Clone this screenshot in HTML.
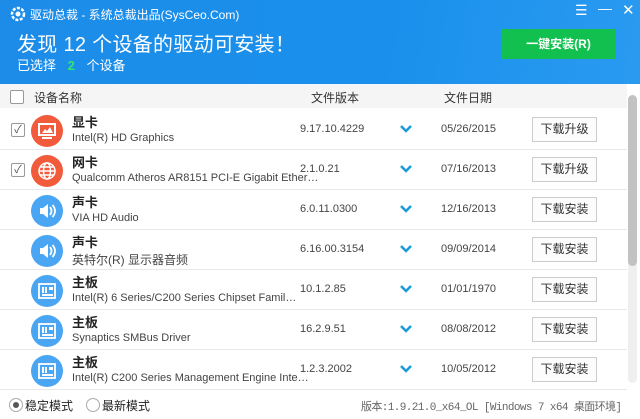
<!DOCTYPE html><html><head><meta charset="utf-8"><style>
*{margin:0;padding:0;box-sizing:border-box}
body{width:640px;height:419px;overflow:hidden;background:#fff;font-family:"Liberation Sans","Noto Sans CJK SC",sans-serif;position:relative;color:#333}
.hd{position:absolute;left:0;top:0;width:640px;height:84px;background:linear-gradient(100deg,#1c8ce8 0%,#1a90ec 60%,#2a9af0 100%)}
.a{position:absolute;white-space:nowrap}
.colh{position:absolute;left:0;top:84px;width:627px;height:24px;background:#f5f5f5}
.cb{position:absolute;width:14px;height:14px;border:1px solid #999;background:#fff;border-radius:2px}
.row{position:absolute;left:0;width:627px;height:40px;border-bottom:1px solid #e8e8e8}
.ic{position:absolute;left:31px;top:5px;width:32px;height:32px;border-radius:50%}
.t{position:absolute;left:72px;top:2px;font-size:13px;font-weight:bold;color:#222}
.s{position:absolute;left:72px;top:22px;font-size:11px;color:#444}
.v{position:absolute;left:300px;top:13px;font-size:11px;color:#444}
.d{position:absolute;left:441px;top:13px;font-size:11px;color:#444}
.chev{position:absolute;left:400px;top:14px}
.btn{position:absolute;left:532px;top:7px;width:65px;height:25px;border:1px solid #ccc;background:#fcfcfc;font-size:12px;text-align:center;line-height:23px;color:#333}
</style></head><body>
<div class="hd"></div>
<svg class="a" style="left:10px;top:6px" width="16" height="16" viewBox="0 0 16 16"><circle cx="8" cy="8" r="6" fill="none" stroke="#fff" stroke-width="2.5" stroke-dasharray="3 1.5"/><circle cx="8" cy="8" r="2.5" fill="#fff"/></svg>
<div class="a" style="left:30px;top:6px;font-size:12px;color:#fff">驱动总裁 - 系统总裁出品(SysCeo.Com)</div>
<div class="a" style="left:575px;top:2px;color:#fff;font-size:14px">☰</div>
<div class="a" style="left:598px;top:0px;color:#fff;font-size:14px">—</div>
<div class="a" style="left:622px;top:1px;color:#fff;font-size:15px">✕</div>
<div class="a" style="left:17px;top:28px;font-size:20px;color:#fff;letter-spacing:0.3px">发现 12 个设备的驱动可安装！</div>
<div class="a" style="left:17px;top:55px;font-size:13px;color:#fff">已选择 <span style="color:#2ee86a;font-weight:bold;margin:0 8px">2</span> 个设备</div>
<div class="a" style="left:501px;top:29px;width:115px;height:30px;background:#12c04f;color:#fff;font-size:12px;font-weight:bold;text-align:center;line-height:30px">一键安装(R)</div>
<div class="colh"></div>
<div class="cb" style="left:10px;top:90px"></div>
<div class="a" style="left:34px;top:89px;font-size:12px">设备名称</div>
<div class="a" style="left:311px;top:89px;font-size:12px">文件版本</div>
<div class="a" style="left:444px;top:89px;font-size:12px">文件日期</div>
<div class="a" style="left:628px;top:95px;width:9px;height:288px;background:#efefef;border-radius:5px"></div>
<div class="a" style="left:628px;top:95px;width:9px;height:171px;background:#c2c2c2;border-radius:5px"></div>

<div class="row" style="top:110px"><div class="cb" style="left:11px;top:13px;text-align:center;font-size:11px;line-height:12px;color:#555">✓</div><div class="ic" style="background:#f15a3b"><svg width="32" height="32"><rect x="8" y="9" width="16" height="11" fill="none" stroke="#fff" stroke-width="2"/><path d="M11 18l3-4 2 2 3-4 3 6z" fill="#fff"/><rect x="11" y="22" width="10" height="2" fill="#fff"/></svg></div><div class="t">显卡</div><div class="s">Intel(R) HD Graphics</div><div class="v">9.17.10.4229</div><svg class="chev" width="12" height="10"><path d="M1 2l5 5 5-5" stroke="#1a9ad8" stroke-width="2.5" fill="none"/></svg><div class="d">05/26/2015</div><div class="btn">下载升级</div></div>
<div class="row" style="top:150px"><div class="cb" style="left:11px;top:13px;text-align:center;font-size:11px;line-height:12px;color:#555">✓</div><div class="ic" style="background:#f15a3b"><svg width="32" height="32"><circle cx="16" cy="16" r="8" fill="none" stroke="#fff" stroke-width="1.5"/><ellipse cx="16" cy="16" rx="3.5" ry="8" fill="none" stroke="#fff" stroke-width="1.5"/><path d="M8 16h16M9 12h14M9 20h14" stroke="#fff" stroke-width="1.5"/></svg></div><div class="t">网卡</div><div class="s">Qualcomm Atheros AR8151 PCI-E Gigabit Ether…</div><div class="v">2.1.0.21</div><svg class="chev" width="12" height="10"><path d="M1 2l5 5 5-5" stroke="#1a9ad8" stroke-width="2.5" fill="none"/></svg><div class="d">07/16/2013</div><div class="btn">下载升级</div></div>
<div class="row" style="top:190px"><div class="ic" style="background:#4aa6f2"><svg width="32" height="32"><path d="M9 13h3l5-4v14l-5-4H9z" fill="#fff"/><path d="M19 12q3 4 0 8M21.5 10q5 6 0 12" stroke="#fff" stroke-width="1.8" fill="none"/></svg></div><div class="t">声卡</div><div class="s">VIA HD Audio</div><div class="v">6.0.11.0300</div><svg class="chev" width="12" height="10"><path d="M1 2l5 5 5-5" stroke="#1a9ad8" stroke-width="2.5" fill="none"/></svg><div class="d">12/16/2013</div><div class="btn">下载安装</div></div>
<div class="row" style="top:230px"><div class="ic" style="background:#4aa6f2"><svg width="32" height="32"><path d="M9 13h3l5-4v14l-5-4H9z" fill="#fff"/><path d="M19 12q3 4 0 8M21.5 10q5 6 0 12" stroke="#fff" stroke-width="1.8" fill="none"/></svg></div><div class="t">声卡</div><div class="s" style="font-size:12px;top:21px">英特尔(R) 显示器音频</div><div class="v">6.16.00.3154</div><svg class="chev" width="12" height="10"><path d="M1 2l5 5 5-5" stroke="#1a9ad8" stroke-width="2.5" fill="none"/></svg><div class="d">09/09/2014</div><div class="btn">下载安装</div></div>
<div class="row" style="top:270px"><div class="ic" style="background:#4aa6f2"><svg width="32" height="32"><rect x="8" y="9" width="16" height="14" fill="none" stroke="#fff" stroke-width="1.8"/><path d="M11 12h2v6h-2zM14 12h2v6h-2zM18 12h4v3h-4zM11 19h11v2H11z" fill="#fff"/></svg></div><div class="t">主板</div><div class="s">Intel(R) 6 Series/C200 Series Chipset Famil…</div><div class="v">10.1.2.85</div><svg class="chev" width="12" height="10"><path d="M1 2l5 5 5-5" stroke="#1a9ad8" stroke-width="2.5" fill="none"/></svg><div class="d">01/01/1970</div><div class="btn">下载安装</div></div>
<div class="row" style="top:310px"><div class="ic" style="background:#4aa6f2"><svg width="32" height="32"><rect x="8" y="9" width="16" height="14" fill="none" stroke="#fff" stroke-width="1.8"/><path d="M11 12h2v6h-2zM14 12h2v6h-2zM18 12h4v3h-4zM11 19h11v2H11z" fill="#fff"/></svg></div><div class="t">主板</div><div class="s">Synaptics SMBus Driver</div><div class="v">16.2.9.51</div><svg class="chev" width="12" height="10"><path d="M1 2l5 5 5-5" stroke="#1a9ad8" stroke-width="2.5" fill="none"/></svg><div class="d">08/08/2012</div><div class="btn">下载安装</div></div>
<div class="row" style="top:350px"><div class="ic" style="background:#4aa6f2"><svg width="32" height="32"><rect x="8" y="9" width="16" height="14" fill="none" stroke="#fff" stroke-width="1.8"/><path d="M11 12h2v6h-2zM14 12h2v6h-2zM18 12h4v3h-4zM11 19h11v2H11z" fill="#fff"/></svg></div><div class="t">主板</div><div class="s">Intel(R) C200 Series Management Engine Inte…</div><div class="v">1.2.3.2002</div><svg class="chev" width="12" height="10"><path d="M1 2l5 5 5-5" stroke="#1a9ad8" stroke-width="2.5" fill="none"/></svg><div class="d">10/05/2012</div><div class="btn">下载安装</div></div>

<div class="a" style="left:9px;top:398px;width:14px;height:14px;border:1px solid #aaa;border-radius:50%;background:#fff"><div style="margin:3px;width:6px;height:6px;border-radius:50%;background:#555"></div></div>
<div class="a" style="left:25px;top:397px;font-size:12px;color:#222">稳定模式</div>
<div class="a" style="left:86px;top:398px;width:14px;height:14px;border:1px solid #aaa;border-radius:50%;background:#fff"></div>
<div class="a" style="left:102px;top:397px;font-size:12px;color:#222">最新模式</div>
<div class="a" style="left:361px;top:398px;font-size:11px;color:#666;font-family:'Liberation Mono','Noto Sans CJK SC',monospace;letter-spacing:-0.6px">版本:1.9.21.0_x64_OL [Windows 7 x64 桌面环境]</div>
</body></html>
